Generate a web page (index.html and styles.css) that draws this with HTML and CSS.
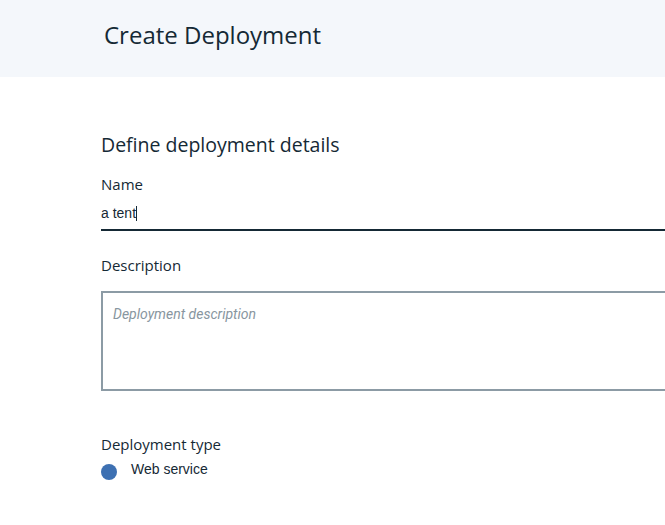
FILE: index.html
```html
<!DOCTYPE html>
<html>
<head>
<meta charset="utf-8">
<link rel="stylesheet" href="styles.css">
</head>
<body>
<header class="page-header">
  <h1 class="page-title">Create Deployment</h1>
</header>
<main class="content">
  <h2 class="section-title">Define deployment details</h2>
  <div class="field">
    <label class="label">Name</label>
    <div class="text-input">a tent<span class="caret"></span></div>
  </div>
  <div class="field field-desc">
    <label class="label">Description</label>
    <div class="textarea"><span class="placeholder">Deployment description</span></div>
  </div>
  <div class="field field-type">
    <label class="label">Deployment type</label>
    <div class="radio-row">
      <span class="radio"></span>
      <span class="radio-text">Web service</span>
    </div>
  </div>
</main>
</body>
</html>
```
FILE: styles.css
```css
html, body {
  margin: 0;
  padding: 0;
  background: #ffffff;
  overflow: hidden;
}
body {
  width: 665px;
  height: 525px;
  font-family: "Open Sans", "Noto Sans", sans-serif;
  color: #152935;
}
.page-header {
  height: 77px;
  background: #f4f7fb;
  display: flex;
  align-items: center;
  padding-left: 104px;
  box-sizing: border-box;
}
.page-title {
  margin: 0;
  font-size: 24px;
  font-weight: 400;
  line-height: 30px;
  letter-spacing: 0;
  color: #152935;
  padding-bottom: 8px;
}
.content {
  padding-left: 101px;
  padding-top: 54px;
  width: 564px;
  overflow: hidden;
}
.section-title {
  margin: 0;
  font-size: 19.5px;
  font-weight: 400;
  line-height: 28px;
}
.field {
  display: flex;
  flex-direction: column;
}
.label {
  font-size: 15px;
  line-height: 20px;
  margin-top: 15px;
}
.text-input {
  font-family: "Liberation Sans", Arial, sans-serif;
  font-size: 14px;
  line-height: 20px;
  margin-top: 9px;
  padding-bottom: 6px;
  border-bottom: 2px solid #152935;
  width: 600px;
  display: flex;
  align-items: center;
}
.caret {
  display: inline-block;
  width: 1px;
  height: 15px;
  background: #152935;
}
.field-desc .label {
  margin-top: 24px;
}
.textarea {
  margin-top: 16px;
  width: 600px;
  height: 100px;
  border: 2px solid #8c9ba5;
  box-sizing: border-box;
  padding: 9px 10px;
}
.placeholder {
  font-family: Roboto, "Liberation Sans", sans-serif;
  font-style: italic;
  font-size: 14px;
  color: #8896a0;
}
.field-type .label {
  margin-top: 43px;
}
.radio-row {
  display: flex;
  align-items: center;
  margin-top: 4px;
}
.radio {
  width: 16px;
  height: 16px;
  border-radius: 50%;
  background: #3d70b2;
  margin-top: 6px;
}
.radio-text {
  font-family: "Liberation Sans", Arial, sans-serif;
  font-size: 14px;
  line-height: 20px;
  margin-left: 14px;
}
```
